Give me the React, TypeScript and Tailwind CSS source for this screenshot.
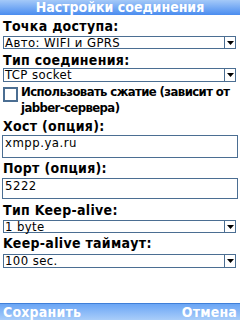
import React from "react";

const font = { fontFamily: '"DejaVu Sans Condensed", "DejaVu Sans", sans-serif' };

function Label({ text, className = "" }: { text: string; className?: string }) {
	return <div className={`ml-[1px] h-[14px] text-[14px] leading-[14px] font-bold tracking-[0.3px] text-black ${className}`}>{text}</div>;
}

function Select({ value, className = "" }: { value: string; className?: string }) {
	return (
		<div className={`ml-[1px] flex w-[233px] border border-[#4b6e92] bg-white ${className}`}>
			<div className="flex-1 pl-[1px] text-[13px] leading-[11px] tracking-[0.4px] text-black">{value}</div>
			<div className="flex w-[11px] items-center justify-center border-l border-[#4b6e92]">
				<svg width="7" height="4" viewBox="0 0 7 4">
					<polygon points="0,0 7,0 3.5,4" fill="#000" />
				</svg>
			</div>
		</div>
	);
}

function Input({ value, className = "" }: { value: string; className?: string }) {
	return (
		<div className={`w-[236px] border border-[#4b6e92] bg-white pl-[2px] text-[13px] leading-[14px] tracking-[0.5px] text-black ${className}`}>
			{value}
		</div>
	);
}

export default function App() {
	return (
		<div className="flex h-[320px] w-[240px] flex-col overflow-hidden bg-white" style={font}>
			{/* Title */}
			<div className="flex h-[15px] items-center justify-center bg-gradient-to-b from-[#a4c9f8] to-[#4a8cef] text-[14px] leading-[15px] font-bold text-white">
				Настройки соединения
			</div>

			<div className="flex flex-col pl-[2px]">
				<Label text="Точка доступа:" className="mt-[4px]" />
				<Select value="Авто: WIFI и GPRS" className="mt-[3px] h-[13px]" />

				<Label text="Тип соединения:" className="mt-[4px]" />
				<Select value="TCP socket" className="mt-[1px] h-[14px]" />

				{/* Compression checkbox */}
				<div className="mt-[2px] flex items-start gap-[3px]">
					<div className="mt-[3px] ml-[1px] h-[15px] w-[15px] shrink-0 border-2 border-[#4b6e92] bg-white" />
					<div className="text-[13px] leading-[16px] font-bold tracking-[-0.6px] whitespace-nowrap text-black">
						Использовать сжатие (зависит от
						<br />
						jabber-сервера)
					</div>
				</div>

				<Label text="Хост (опция):" className="mt-[3px]" />
				<Input value="xmpp.ya.ru" className="mt-[2px] h-[23px]" />

				<Label text="Порт (опция):" className="mt-[3px]" />
				<Input value="5222" className="mt-[3px] h-[21px]" />

				<Label text="Тип Keep-alive:" className="mt-[4px]" />
				<Select value="1 byte" className="mt-[3px] h-[13px]" />

				<Label text="Keep-alive таймаут:" className="mt-[3px]" />
				<Select value="100 sec." className="mt-[4px] h-[14px]" />
			</div>

			{/* Soft keys */}
			<div className="mt-auto flex h-[17px] items-center justify-between border-t border-[#3f7fd8] bg-gradient-to-b from-[#6aa5f5] to-[#a9cdf9] px-[3px] text-[14px] leading-[15px] font-bold tracking-[0.2px] text-white">
				<span>Сохранить</span>
				<span>Отмена</span>
			</div>
		</div>
	);
}
